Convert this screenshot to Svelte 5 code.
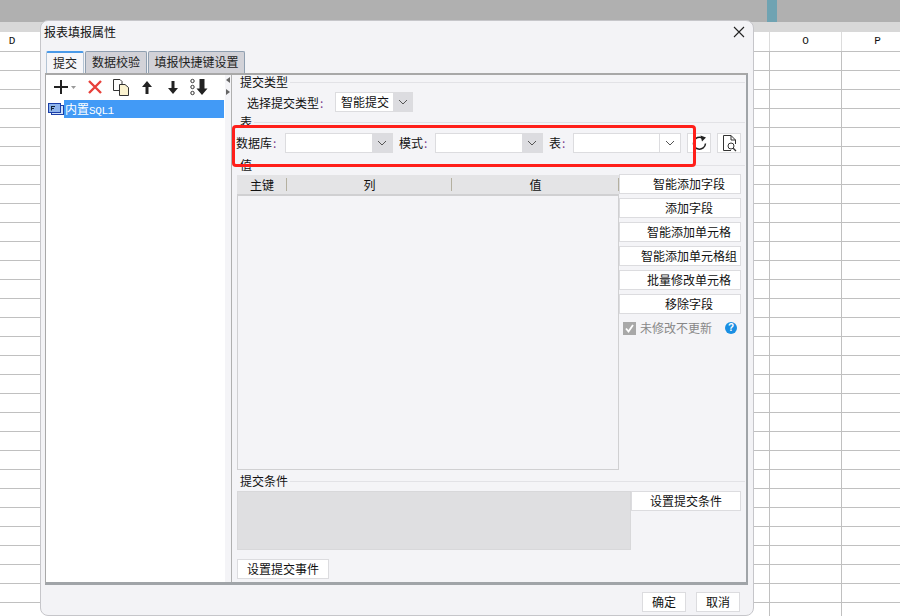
<script>
  const sideButtons = ['智能添加字段', '添加字段', '智能添加单元格', '智能添加单元格组', '批量修改单元格', '移除字段'];
</script>

<div class="sheet">
  <div class="topbar"><span class="marker"></span></div>
  <div class="strip"></div>
  <div class="labels">
    <span class="col-d">D</span>
    <span class="col-o">O</span>
    <span class="col-p">P</span>
  </div>
  <div class="rows"></div>

  <div class="dialog">
    <div class="titlebar">
      <span>报表填报属性</span>
      <svg class="close" width="12" height="12" viewBox="0 0 12 12"><path d="M1 1L11 11M11 1L1 11" stroke="#222" stroke-width="1.1" fill="none"/></svg>
    </div>
    <div class="tabs">
      <div class="tab active">提交</div>
      <div class="tab t2">数据校验</div>
      <div class="tab t3">填报快捷键设置</div>
    </div>

    <div class="panel">
      <div class="left">
        <div class="toolbar">
          <svg class="plus" width="32" height="24" viewBox="0 0 32 24">
            <path d="M6 12H20M13 5V19" stroke="#222" stroke-width="2" fill="none"/>
            <path d="M23 11H28L25.500 14Z" fill="#999"/>
          </svg>
          <svg width="22" height="24" viewBox="0 0 22 24"><path d="M5 6L17 18M17 6L5 18" stroke="#e8403a" stroke-width="2.400" fill="none"/></svg>
          <svg width="22" height="24" viewBox="0 0 22 24">
            <path d="M3.500 4.500H10L12 6.500V15.500H3.500Z" fill="#fff" stroke="#333"/>
            <path d="M9.500 9.500H15L18.500 12.500V20.500H9.500Z" fill="#fbf3d0" stroke="#333"/>
          </svg>
          <svg width="22" height="24" viewBox="0 0 22 24"><path d="M11 6L16 12H12.500V19H9.500V12H6Z" fill="#222"/></svg>
          <svg width="22" height="24" viewBox="0 0 22 24"><path d="M11 19L6 13H9.500V6H12.500V13H16Z" fill="#222"/></svg>
          <svg width="22" height="24" viewBox="0 0 22 24">
            <circle cx="4.500" cy="6" r="1.700" fill="none" stroke="#333"/>
            <circle cx="4.500" cy="12" r="1.700" fill="none" stroke="#333"/>
            <circle cx="4.500" cy="18" r="1.700" fill="none" stroke="#333"/>
            <path d="M14 20L8.500 13.500H11.500V4H16.500V13.500H19.500Z" fill="#222"/>
          </svg>
        </div>
        <div class="tree-row">
          <svg width="16" height="14" viewBox="0 0 16 14">
            <rect x="3.500" y="3.500" width="12" height="9" fill="#cfe0f8" stroke="#1c3fa8"/>
            <rect x="0.500" y="1.500" width="12" height="9" fill="#8fb4ec" stroke="#1c3fa8"/>
            <path d="M3 4.500H7M3 6.500H6M3.500 4.500V8.500" stroke="#123" fill="none"/>
          </svg>
          <div class="tree-label">内置<span class="mono">SQL1</span></div>
        </div>
      </div>

      <div class="splitter">
        <span class="tri-l"></span>
        <span class="tri-r"></span>
      </div>

      <div class="right">
        <div class="legend"><span>提交类型</span></div>
        <div class="type-row">
          <span class="type-label">选择提交类型<i>:</i></span>
          <div class="select type-select">
            <div class="value">智能提交</div>
            <div class="arrow"><svg width="10" height="6" viewBox="0 0 10 6"><path d="M1 1L5 5L9 1" stroke="#555" fill="none"/></svg></div>
          </div>
        </div>

        <div class="legend mt3"><span>表</span></div>
        <div class="db-row">
          <span class="lbl">数据库<i>:</i></span>
          <div class="select wide">
            <div class="value"></div>
            <div class="arrow"><svg width="10" height="6" viewBox="0 0 10 6"><path d="M1 1L5 5L9 1" stroke="#555" fill="none"/></svg></div>
          </div>
          <span class="lbl l2">模式<i>:</i></span>
          <div class="select wide">
            <div class="value"></div>
            <div class="arrow"><svg width="10" height="6" viewBox="0 0 10 6"><path d="M1 1L5 5L9 1" stroke="#555" fill="none"/></svg></div>
          </div>
          <span class="lbl l3">表<i>:</i></span>
          <div class="select wide light">
            <div class="value"></div>
            <div class="arrow"><svg width="10" height="6" viewBox="0 0 10 6"><path d="M1 1L5 5L9 1" stroke="#555" fill="none"/></svg></div>
          </div>
          <div class="icon-btn first">
            <svg width="16" height="16" viewBox="0 0 16 16">
              <path d="M14.500 8.500A6 6 0 1 1 11.500 3" stroke="#222" stroke-width="1.500" fill="none"/>
              <path d="M9.500 0.500L15 2.500L11 6.500Z" fill="#222"/>
            </svg>
          </div>
          <div class="icon-btn">
            <svg width="16" height="18" viewBox="0 0 16 18">
              <path d="M10 16.500H2.500V1.500H10L14.500 6V10" fill="none" stroke="#333"/>
              <path d="M10 1.500V6H14.500" fill="none" stroke="#333"/>
              <circle cx="10" cy="12" r="3" fill="#fff" stroke="#333"/>
              <path d="M12.200 14.200L15 17" stroke="#333" stroke-width="1.300"/>
            </svg>
          </div>
        </div>

        <div class="legend mt5"><span>值</span></div>
        <div class="value-row">
          <div class="table">
            <div class="thead">
              <div class="th c1">主键</div>
              <div class="th c2">列</div>
              <div class="th c3">值</div>
            </div>
          </div>
          <div class="side">
            {#each sideButtons as text}
              <button class="btn">{text}</button>
            {/each}
            <div class="check-row">
              <span class="check"><svg width="13" height="13" viewBox="0 0 13 13"><path d="M3 6.500L5.500 9.500L10 3" stroke="#fff" stroke-width="1.800" fill="none"/></svg></span>
              <span class="check-text">未修改不更新</span>
              <span class="help">?</span>
            </div>
          </div>
        </div>

        <div class="legend mt4"><span>提交条件</span></div>
        <div class="cond-row">
          <div class="cond"></div>
          <button class="btn cond-btn">设置提交条件</button>
        </div>
        <button class="btn event-btn">设置提交事件</button>
      </div>
    </div>

    <div class="footer">
      <button class="btn foot">确定</button>
      <button class="btn foot">取消</button>
    </div>
  </div>

  <div class="highlight"></div>
</div>

<style>
  :global(body) {
    margin: 0;
    overflow: hidden;
  }
  .sheet {
    position: relative;
    width: 900px;
    height: 616px;
    overflow: hidden;
    background: #fff;
    font-family: "Noto Sans CJK SC", "Liberation Sans", sans-serif;
    font-size: 12px;
    color: #111;
  }
  .topbar {
    position: relative;
    height: 22px;
    background: #b0b0b0;
  }
  .marker {
    position: absolute;
    left: 767px;
    top: 0;
    width: 10px;
    height: 22px;
    background: #6fa3b2;
  }
  .strip {
    height: 10px;
    background: #d8d8d8;
  }
  .labels {
    position: relative;
    display: flex;
    height: 19px;
    line-height: 19px;
    font-family: "Liberation Mono", monospace;
    font-size: 11px;
    text-align: center;
  }
  .col-d {
    flex: none;
    width: 24px;
  }
  .col-o {
    flex: none;
    box-sizing: border-box;
    width: 72px;
    margin-left: 745px;
    border-left: 1px solid #dcdcdc;
  }
  .col-p {
    flex: none;
    box-sizing: border-box;
    width: 72px;
    border-left: 1px solid #dcdcdc;
  }
  .rows {
    height: 565px;
    background:
      linear-gradient(#c0c0c0, #c0c0c0) 769px 0 / 1px 100% no-repeat,
      linear-gradient(#c0c0c0, #c0c0c0) 841px 0 / 1px 100% no-repeat,
      repeating-linear-gradient(#c0c0c0 0, #c0c0c0 1px, #fff 1px, #fff 19px);
  }

  .dialog {
    position: absolute;
    left: 40px;
    top: 20px;
    width: 712px;
    height: 594px;
    display: flex;
    flex-direction: column;
    background: #f3f3f6;
    border: 1px solid #c6c6ca;
    border-radius: 8px;
  }
  .titlebar {
    display: flex;
    justify-content: space-between;
    align-items: center;
    height: 20px;
    padding: 0 3px 0 3px;
    flex: none;
  }
  .close {
    margin-right: 5px;
    margin-top: 2px;
  }
  .tabs {
    display: flex;
    gap: 1px;
    height: 22px;
    margin: 10px 0 0 5px;
    flex: none;
  }
  .tab {
    box-sizing: border-box;
    height: 22px;
    line-height: 19px;
    text-align: center;
    background: #d2d2d8;
    border: 1px solid #8f9fb0;
    border-bottom: none;
    border-radius: 2px 2px 0 0;
    color: #222;
  }
  .tab.active {
    width: 38px;
    background: #f6f6f9;
    border-color: #b4c4d4;
    border-top: 2px solid #4a9ae8;
  }
  .t2 {
    width: 62px;
  }
  .t3 {
    width: 97px;
  }
  .panel {
    display: flex;
    height: 512px;
    box-sizing: border-box;
    margin-left: 4px;
    width: 703px;
    background: #f4f4f7;
    border: 1px solid #a4a4a4;
    border-width: 2px 2px 3px 1px;
    border-color: #a8a8a8 #a0a4a8 #a0a4a8 #a8a8a8;
    flex: none;
  }
  .left {
    width: 179px;
    flex: none;
    background: #fff;
  }
  .toolbar {
    display: flex;
    gap: 4px;
    height: 24px;
    padding-left: 2px;
  }
  .tree-row {
    display: flex;
    align-items: center;
    height: 18px;
    margin: 1px 1px 0 2px;
  }
  .tree-label {
    flex: 1;
    height: 18px;
    line-height: 17px;
    background: #429af6;
    color: #fff;
    padding-left: 1px;
  }
  .mono {
    font-family: "Liberation Mono", monospace;
    font-size: 11px;
    letter-spacing: -0.4px;
  }
  .splitter {
    display: flex;
    flex-direction: column;
    align-items: center;
    gap: 6px;
    box-sizing: border-box;
    width: 7px;
    padding-top: 2px;
    flex: none;
    border-right: 1px solid #b0b0b0;
  }
  .tri-l, .tri-r {
    width: 0;
    height: 0;
    border-top: 3px solid transparent;
    border-bottom: 3px solid transparent;
  }
  .tri-l {
    border-right: 4px solid #666;
  }
  .tri-r {
    border-left: 4px solid #666;
  }
  .right {
    flex: 1;
    padding: 0 1px 0 4px;
    min-width: 0;
  }
  .legend {
    display: flex;
    align-items: center;
    height: 14px;
    line-height: 14px;
    padding-left: 4px;
    gap: 2px;
  }
  .legend::after {
    content: '';
    flex: 1;
    height: 1px;
    background: #e2e2e6;
  }
  .mt3 { margin-top: 3px; }
  .mt4 { margin-top: 4px; }
  .mt5 { margin-top: 5px; }

  i {
    font-style: normal;
    color: #7a3a8a;
    margin-left: 1px;
  }
  .type-row {
    display: flex;
    align-items: center;
    height: 20px;
    margin-top: 3px;
    padding-left: 11px;
  }
  .type-label {
    width: 88px;
  }
  .select {
    box-sizing: border-box;
    display: flex;
    height: 20px;
    background: #fff;
    border: 1px solid #dcdcdf;
  }
  .value {
    flex: 1;
    line-height: 18px;
    padding-left: 5px;
  }
  .arrow {
    display: flex;
    align-items: center;
    justify-content: center;
    width: 20px;
    flex: none;
    background: #dcdce0;
  }
  .type-select {
    width: 78px;
    letter-spacing: 0;
  }
  .type-select .arrow {
    width: 19px;
  }
  .wide {
    width: 108px;
  }
  .light .arrow {
    background: #fff;
    border-left: 1px solid #dcdcdf;
  }
  .db-row {
    display: flex;
    align-items: center;
    height: 20px;
    margin-top: 4px;
  }
  .lbl {
    width: 49px;
    flex: none;
    padding-bottom: 2px;
  }
  .l2 {
    width: 36px;
    padding-left: 6px;
  }
  .l3 {
    width: 24px;
    padding-left: 6px;
  }
  .icon-btn {
    box-sizing: border-box;
    display: flex;
    align-items: center;
    justify-content: center;
    width: 24px;
    height: 20px;
    margin-left: 6px;
    background: #fff;
    border: 1px solid #dcdcdf;
  }
  .value-row {
    display: flex;
    height: 296px;
    margin: 2px 0 0 1px;
  }
  .table {
    box-sizing: border-box;
    width: 382px;
    height: 295px;
    margin-top: 1px;
    border: 1px solid #d0d0d2;
    border-top: none;
  }
  .thead {
    display: flex;
    height: 21px;
    margin-left: -1px;
    margin-right: -1px;
    background: #e4e4e6;
    border-bottom: 2px solid #d0d0d2;
    box-sizing: border-box;
  }
  .th {
    box-sizing: border-box;
    line-height: 19px;
    text-align: center;
    position: relative;
  }
  .th::after {
    content: '';
    position: absolute;
    right: 0;
    top: 3px;
    height: 13px;
    width: 1px;
    background: #b4b0a0;
  }
  .c1 { width: 50px; }
  .c2 { width: 165px; }
  .c3 { width: 167px; }
  .side {
    width: 122px;
    display: flex;
    flex-direction: column;
    gap: 4px;
  }
  .btn {
    box-sizing: border-box;
    display: block;
    width: 122px;
    height: 20px;
    padding: 0 0 0 18px;
    background: #fff;
    border: 1px solid #dcdcdf;
    font: inherit;
    color: #111;
    line-height: 18px;
    text-align: center;
    white-space: nowrap;
  }
  .check-row {
    display: flex;
    align-items: center;
    height: 16px;
    margin-top: 2px;
    padding-left: 4px;
  }
  .check {
    display: block;
    width: 13px;
    height: 13px;
    background: #a8a8a8;
  }
  .check svg {
    display: block;
  }
  .check-text {
    margin-left: 4px;
    margin-top: -2px;
    color: #888;
    width: 85px;
  }
  .help {
    width: 12px;
    height: 12px;
    border-radius: 50%;
    background: #1a8fe3;
    color: #fff;
    font-family: "Liberation Sans", sans-serif;
    font-weight: bold;
    font-size: 10px;
    line-height: 12px;
    text-align: center;
  }
  .cond-row {
    display: flex;
    align-items: flex-start;
    height: 59px;
    margin: 3px 0 0 1px;
  }
  .cond {
    box-sizing: border-box;
    width: 394px;
    height: 59px;
    background: #dfdfe1;
    border: 1px solid #d8d8da;
  }
  .cond-btn {
    width: 110px;
    padding-left: 0;
  }
  .event-btn {
    width: 92px;
    margin: 9px 0 0 1px;
    padding: 0;
  }
  .footer {
    display: flex;
    justify-content: flex-end;
    gap: 10px;
    margin-top: 7px;
    padding-right: 13px;
  }
  .foot {
    width: 44px;
    padding: 0;
  }

  .highlight {
    position: absolute;
    left: 232px;
    top: 125px;
    width: 458px;
    height: 36px;
    border: 3px solid #ff1f1a;
    border-radius: 4px;
  }
</style>
